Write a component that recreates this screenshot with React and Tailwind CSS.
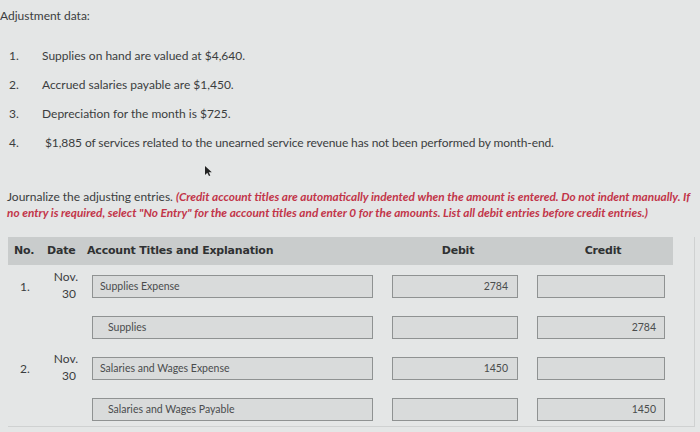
import React from "react";

const rows = [
  { no: "1.", date: true, acct: "Supplies Expense", credit: false, debitV: "2784", creditV: "" },
  { no: "", date: false, acct: "Supplies", credit: true, debitV: "", creditV: "2784" },
  { no: "2.", date: true, acct: "Salaries and Wages Expense", credit: false, debitV: "1450", creditV: "" },
  { no: "", date: false, acct: "Salaries and Wages Payable", credit: true, debitV: "", creditV: "1450" },
];

export default function App() {
  return (
    <div
      className="w-[700px] h-[432px] overflow-hidden bg-[#e4e6e6] text-[#3b3d3e] relative"
      style={{ fontFamily: "Lato, 'Open Sans', sans-serif" }}
    >
      <div className="pt-[7px] pl-0 text-[12px] leading-[18px]">Adjustment data:</div>
      <ol className="mt-[22px] text-[12px] leading-[18px]">
        {[
          "Supplies on hand are valued at $4,640.",
          "Accrued salaries payable are $1,450.",
          "Depreciation for the month is $725.",
          "$1,885 of services related to the unearned service revenue has not been performed by month-end.",
        ].map((t, i) => (
          <li key={i} className="flex h-[29px]">
            <span className="w-[42px] pl-[9px]">{i + 1}.</span>
            <span className={i === 3 ? "pl-[3px] tracking-[-0.1px]" : ""}>{t}</span>
          </li>
        ))}
      </ol>
      <svg className="absolute left-[204px] top-[165px]" width="9" height="12" viewBox="0 0 9 12">
        <path d="M1 1 L1 10 L3.3 7.8 L5 11 L6.3 10.4 L4.7 7.3 L7.8 7.3 Z" fill="#222" />
      </svg>
      <p className="mt-[26px] px-[7px] text-[12px] leading-[16px]">
        Journalize the adjusting entries.{" "}
        <em className="font-bold text-[#c23549] text-[11.8px]">
          (Credit account titles are automatically indented when the amount is entered. Do not indent manually. If
          no entry is required, select "No Entry" for the account titles and enter 0 for the amounts. List all debit
          entries before credit entries.)
        </em>
      </p>
      <div className="ml-[8px] mt-[16px] w-[687px] h-[190px] border-r border-b border-[#cfd1d1]">
        <div
          className="w-[665px] h-[28px] bg-[#c9cccc] flex items-center text-[11px] tracking-[-0.2px] font-bold text-[#2f3132]"
          style={{ fontFamily: "'DejaVu Sans', Verdana, sans-serif" }}
        >
          <span className="w-[39px] pl-[6px]">No.</span>
          <span className="w-[40px]">Date</span>
          <span className="w-[296px]">Account Titles and Explanation</span>
          <span className="w-[150px] text-center">Debit</span>
          <span className="w-[140px] text-center">Credit</span>
        </div>
        <div className="pt-[10px] flex flex-col gap-[18px]">
          {rows.map((r, i) => (
            <div key={i} className="flex items-center h-[23px]">
              <span className="w-[36px] pl-[12px] text-[12px]">{r.no}</span>
              <span className="w-[48px] text-[12px] leading-[17px] flex flex-col items-end pr-[16px]">
                {r.date ? (
                  <>
                    <span className="-mr-[2px] -mt-[4px]">Nov.</span>
                    <span>30</span>
                  </>
                ) : null}
              </span>
              <div
                className={`w-[281px] h-[23px] bg-[#d9dbdb] border border-[#8f9292] flex items-center text-[10.5px] text-[#4a4c4d] ${
                  r.credit ? "pl-[15px]" : "pl-[7px]"
                }`}
              >
                {r.acct}
              </div>
              <div className="ml-[19px] w-[126px] h-[23px] bg-[#d9dbdb] border border-[#8f9292] flex items-center justify-end pr-[9px] text-[10.5px] text-[#4a4c4d]">
                {r.debitV}
              </div>
              <div className="ml-[19px] w-[128px] h-[23px] bg-[#d9dbdb] border border-[#8f9292] flex items-center justify-end pr-[8px] text-[10.5px] text-[#4a4c4d]">
                {r.creditV}
              </div>
            </div>
          ))}
        </div>
      </div>
    </div>
  );
}
